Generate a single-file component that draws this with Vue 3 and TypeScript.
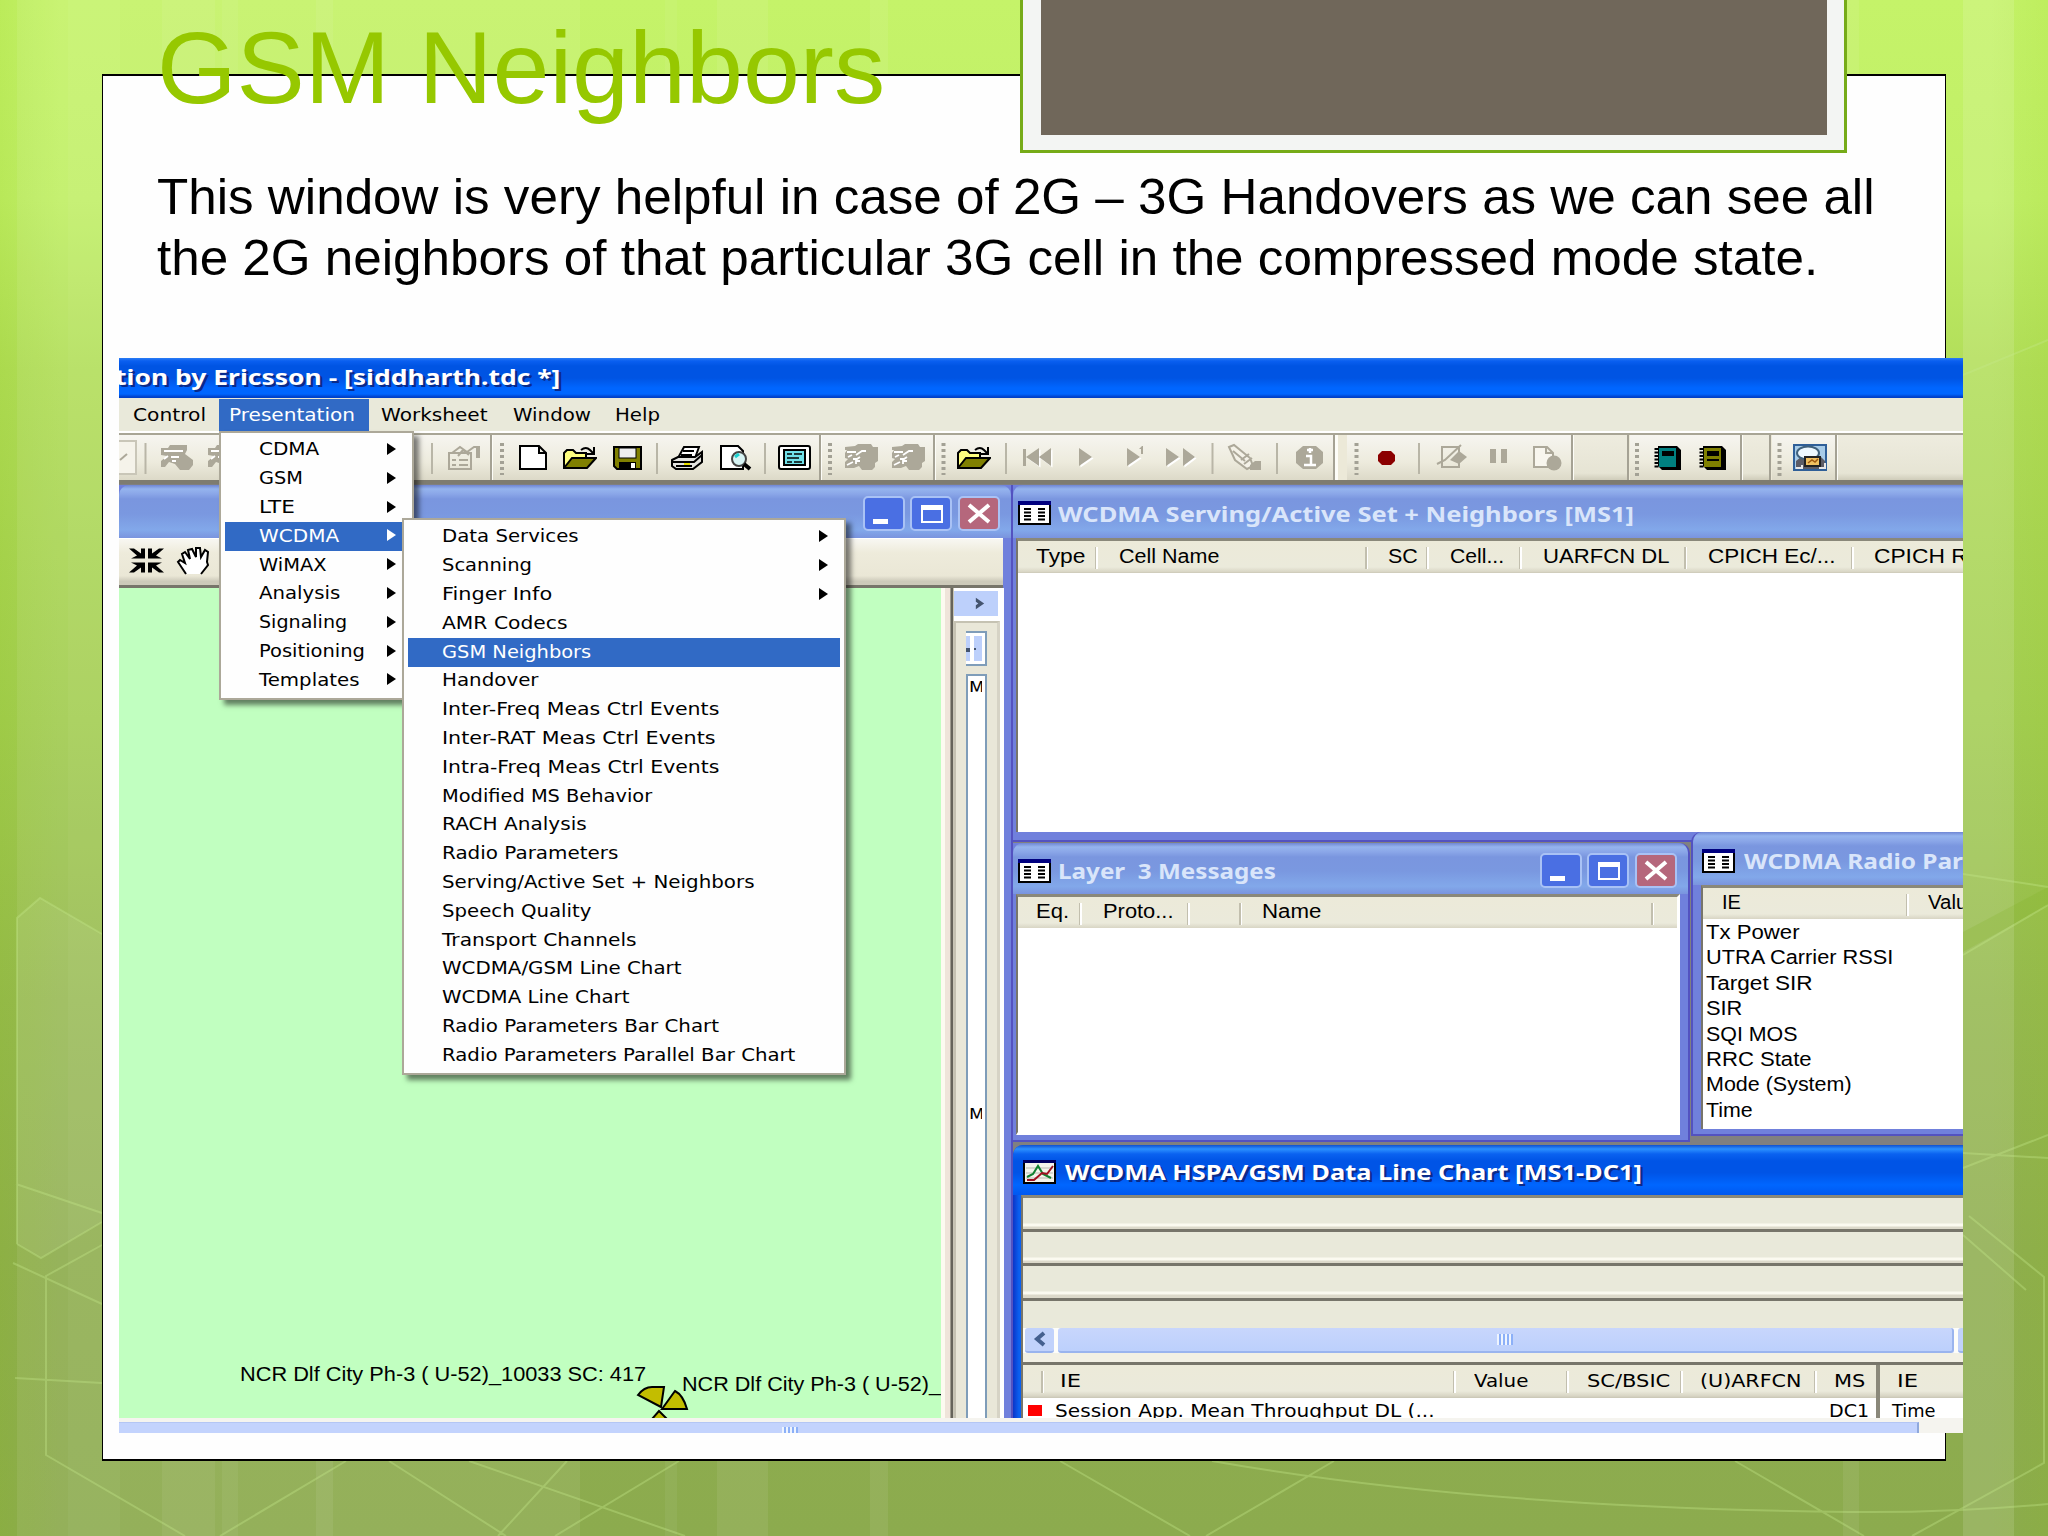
<script setup lang="ts">
interface Item { label: string; w: number; sub?: boolean; active?: boolean }
interface Cell { label: string; w: number; cell: number; pad: number; last?: boolean }

// Stretches a label horizontally so that it takes exactly the given width.
const vFit = {
  mounted(el: HTMLElement, binding: { value: number }) {
    const natural = el.offsetWidth
    if (natural > 0) el.style.transform = `scaleX(${binding.value / natural})`
  },
}

const menuBar: Item[] = [
  { label: 'Control', w: 73 },
  { label: 'Presentation', w: 126, active: true },
  { label: 'Worksheet', w: 107 },
  { label: 'Window', w: 78 },
  { label: 'Help', w: 45 },
]

const presentation: Item[] = [
  { label: 'CDMA', w: 60, sub: true },
  { label: 'GSM', w: 44, sub: true },
  { label: 'LTE', w: 36, sub: true },
  { label: 'WCDMA', w: 80, sub: true, active: true },
  { label: 'WiMAX', w: 68, sub: true },
  { label: 'Analysis', w: 81, sub: true },
  { label: 'Signaling', w: 88, sub: true },
  { label: 'Positioning', w: 106, sub: true },
  { label: 'Templates', w: 101, sub: true },
]

const wcdma: Item[] = [
  { label: 'Data Services', w: 137, sub: true },
  { label: 'Scanning', w: 90, sub: true },
  { label: 'Finger Info', w: 110, sub: true },
  { label: 'AMR Codecs', w: 125 },
  { label: 'GSM Neighbors', w: 149, active: true },
  { label: 'Handover', w: 97 },
  { label: 'Inter-Freq Meas Ctrl Events', w: 277 },
  { label: 'Inter-RAT Meas Ctrl Events', w: 273 },
  { label: 'Intra-Freq Meas Ctrl Events', w: 277 },
  { label: 'Modified MS Behavior', w: 210 },
  { label: 'RACH Analysis', w: 145 },
  { label: 'Radio Parameters', w: 176 },
  { label: 'Serving/Active Set + Neighbors', w: 313 },
  { label: 'Speech Quality', w: 149 },
  { label: 'Transport Channels', w: 194 },
  { label: 'WCDMA/GSM Line Chart', w: 239 },
  { label: 'WCDMA Line Chart', w: 188 },
  { label: 'Radio Parameters Bar Chart', w: 277 },
  { label: 'Radio Parameters Parallel Bar Chart', w: 353 },
]

const servingCols: Cell[] = [
  { label: 'Type', w: 49, cell: 80, pad: 18 },
  { label: 'Cell Name', w: 100, cell: 270, pad: 21 },
  { label: 'SC', w: 30, cell: 61, pad: 20 },
  { label: 'Cell...', w: 54, cell: 93, pad: 21 },
  { label: 'UARFCN DL', w: 126, cell: 165, pad: 21 },
  { label: 'CPICH Ec/...', w: 127, cell: 167, pad: 21 },
  { label: 'CPICH RSCP', w: 140, cell: 170, pad: 20 },
]
const layer3Cols: Cell[] = [
  { label: 'Eq.', w: 33, cell: 64, pad: 18 },
  { label: 'Proto...', w: 70, cell: 108, pad: 21 },
  { label: '', w: 0, cell: 52, pad: 0 },
  { label: 'Name', w: 59, cell: 412, pad: 20 },
]
const radioCols: Cell[] = [
  { label: 'IE', w: 19, cell: 206, pad: 19 },
  { label: 'Value', w: 51, cell: 100, pad: 19 },
]
const chartCols: Cell[] = [
  { label: '', w: 0, cell: 21, pad: 0 },
  { label: 'IE', w: 21, cell: 412, pad: 16 },
  { label: 'Value', w: 54, cell: 113, pad: 18 },
  { label: 'SC/BSIC', w: 83, cell: 114, pad: 18 },
  { label: '(U)ARFCN', w: 102, cell: 134, pad: 17 },
  { label: 'MS', w: 31, cell: 60, pad: 17, last: true },
]
const radioRows: Item[] = [
  { label: 'Tx Power', w: 93 },
  { label: 'UTRA Carrier RSSI', w: 187 },
  { label: 'Target SIR', w: 106 },
  { label: 'SIR', w: 36 },
  { label: 'SQI MOS', w: 92 },
  { label: 'RRC State', w: 106 },
  { label: 'Mode (System)', w: 146 },
  { label: 'Time', w: 47 },
]

const stripes = [
  [17, 51, 0.07], [68, 52, 0.1], [120, 460, 0.07], [162, 53, 0.06], [222, 16, 0.05], [316, 17, 0.07],
  [665, 12, 0.05], [717, 51, 0.07], [870, 18, 0.07], [1843, 16, 0.07], [1963, 51, 0.12],
]
</script>

<template>
  <div class="slide">
    <svg class="backdrop" viewBox="0 0 2048 1536">
      <rect v-for="(s, i) in stripes" :key="i" :x="s[0]" y="0" :width="s[1]" height="1536" fill="#fff" :opacity="s[2]" />
      <g fill="#fff" opacity=".06">
        <path d="M17 918L40 898L102 934V1222L41 1258L17 1244Z" />
      </g>
      <path d="M1963 932L2048 887V905L1963 952Z" fill="#7fb020" opacity=".2" />
      <g fill="none" stroke="#c4e88a" stroke-width="2" opacity=".36">
        <path d="M17 1244V918L40 898L102 934M17 1244L41 1258L102 1222M16 1184L102 1213M102 1245L46 1276V1455L185 1536M13 1263L102 1304M15 1378L102 1383" />
        <path d="M346 1461L220 1536M389 1461L506 1536M469 1461L685 1536M567 1461L498 1536M679 1461L555 1536" />
        <path d="M1060 1461L1190 1536M1334 1461L1206 1536M1735 1461L1864 1536M1212 1461Q1480 1508 1850 1512Q1950 1513 2048 1504" />
        <path d="M1963 1235L2026 1290M1969 1216L2044 1277V1463L1912 1536M1963 874L2048 887M1963 955L2048 905M1963 1168L2048 1135M1963 1153L2048 1158M1963 375L2048 340" />
      </g>
    </svg>

    <svg class="defs">
      <symbol id="list" viewBox="0 0 33 24">
        <rect width="33" height="24" fill="#000" /><rect x="2" y="4" width="29" height="18" fill="#fff" />
        <rect width="33" height="4" fill="#000080" />
        <path d="M6 8h7M6 11.500h7M6 15h7M6 18.500h7M20 8h7M20 11.500h7M20 15h7M20 18.500h7" stroke="#000" stroke-width="2" />
      </symbol>
      <symbol id="chart" viewBox="0 0 33 24">
        <rect width="33" height="24" fill="#000" /><rect x="2" y="3" width="29" height="19" fill="#f4f4ec" />
        <rect width="33" height="3" fill="#000060" />
        <path d="M3 8h27M3 13h27M3 18h27" stroke="#b8b8b0" />
        <path d="M4 17l6-3 5-8 5 8 8 4" stroke="#108030" stroke-width="2" fill="none" />
        <path d="M4 20h7l8-7 5 1 6-8" stroke="#a01020" stroke-width="2" fill="none" />
      </symbol>
      <symbol id="open" viewBox="0 0 34 24">
        <path d="M1 22V7l3-3h6l3 3h10v5" fill="#ffff80" stroke="#000" stroke-width="2" />
        <path d="M1 22L9 12H33L24 22Z" fill="#808000" stroke="#000" stroke-width="2" />
        <path d="M18 4q5-4 9 0l3 3M31 1v7h-7" fill="none" stroke="#000" stroke-width="2" />
      </symbol>
      <symbol id="phones" viewBox="0 0 34 26">
        <path d="M11 2L14 0H27L29 3H34V17L31 19V23L28 26H18L15 22L10 24H1V18L4 15L1 14V9L3 6H1V3Z" fill="#aca899" />
        <path d="M3 8h9M4 13l4-2M12 11l6-4h4M9 15h4l3-2M3 21l6-3M12 20v-3h4" stroke="#fff" stroke-width="1.800" fill="none" />
      </symbol>
      <symbol id="phone" viewBox="0 0 34 26">
        <path d="M10 1H27V6L25 10L29 13L33 16V21L29 26H20L15 20L9 18L5 23H1V17L7 12L1 11V4H8Z" fill="#aca899" />
        <path d="M4 7h19M4 15l4-3M11 13h8M12 17h4" stroke="#fff" stroke-width="1.800" fill="none" />
      </symbol>
      <symbol id="controls" viewBox="0 0 138 35">
        <g stroke="#a9c2f5" stroke-width="2">
          <rect x="1" y="1" width="40" height="33" rx="4" fill="#4a6fe3" />
          <rect x="48" y="1" width="40" height="33" rx="4" fill="#4a6fe3" />
          <rect x="96" y="1" width="40" height="33" rx="4" fill="#b5677c" />
        </g>
        <rect x="10" y="23" width="15" height="5" fill="#fff" />
        <path d="M59 11H79V26H59Z" fill="none" stroke="#fff" stroke-width="2" />
        <rect x="58" y="9" width="22" height="5" fill="#fff" />
        <path d="M106 9L126 26M126 9L106 26" stroke="#fff" stroke-width="4" />
      </symbol>
    </svg>

    <main class="sheet">
      <h1 class="title"><span v-fit="728" class="fit">GSM Neighbors</span></h1>
      <p class="body">
        <span v-fit="1718" class="fit">This window is very helpful in case of 2G – 3G Handovers as we can see all</span><br>
        <span v-fit="1661" class="fit">the 2G neighbors of that particular 3G cell in the compressed mode state.</span>
      </p>
    </main>
    <div class="plaque"><div></div></div>

    <section class="app">
      <header class="caption"><span v-fit="445" class="fit">tion by Ericsson - [siddharth.tdc *]</span></header>
      <nav class="menubar">
        <div v-for="m in menuBar" :key="m.label" class="entry" :class="[{ on: m.active }, m.label.toLowerCase()]">
          <span v-fit="m.w" class="fit">{{ m.label }}</span>
        </div>
      </nav>

      <div class="toolbar">
        <svg class="g1" viewBox="119 435 371 45">
          <path d="M119 441h17v33h-17" fill="#f5f3ea" stroke="#c9c6b8" stroke-width="2" /><path d="M120 460l7-6" stroke="#aca899" stroke-width="2" />
          <path d="M145.500 443v31M432 443v31" stroke="#b9b6a7" stroke-width="2" />
          <use href="#phone" x="160" y="444" width="34" height="26" /><use href="#phone" x="207" y="444" width="34" height="26" />
          <g stroke="#aca899" fill="none" stroke-width="2"><path d="M449 453h22v16h-22zM452 460h4M459 460h9M452 465h4M459 465h9M452 453l8-6 7 5 7-5h6M458 456l5-6 6 5" /><path d="M478 446v12" stroke-width="4" /></g>
        </svg>
        <svg class="g2" viewBox="493 435 326 45">
          <path d="M502 443v32" class="grip" />
          <path d="M520 446H539L546 453V469H520ZM539 446V453H546" fill="#fff" stroke="#000" stroke-width="2" />
          <use href="#open" x="563" y="446" width="34" height="24" />
          <path d="M614 447H641V469H617L614 466Z" fill="#808000" stroke="#000" stroke-width="2" /><rect x="619" y="448" width="17" height="10" fill="#eee" stroke="#000" /><rect x="619" y="462" width="17" height="7" /><rect x="631" y="463" width="4" height="5" fill="#fff" />
          <path d="M657 443v31M765 443v31" stroke="#b9b6a7" stroke-width="2" />
          <path d="M678 458L684 447H699L695 458M683 451h11M681 455h11" fill="#fff" stroke="#000" stroke-width="2" /><path d="M672 460L678 457H695L702 452V462L693 469H676L672 466Z" fill="#e4e4e0" stroke="#000" stroke-width="2" /><path d="M673 462H694L702 455M676 466H692" stroke="#000" stroke-width="2" fill="none" /><path d="M684 464h6" stroke="#e8e000" stroke-width="2" />
          <path d="M721 446H738L743 451V469H721Z" fill="#fff" stroke="#000" stroke-width="2" /><circle cx="739" cy="459" r="7" fill="#d7f4f4" stroke="#444" stroke-width="2" /><path d="M744 464L750 469" stroke="#000" stroke-width="4" /><path d="M735 457l4-3" stroke="#20d0d0" stroke-width="3" />
          <rect x="779" y="446" width="31" height="23" rx="2" fill="#fff" stroke="#000" stroke-width="2" /><rect x="784" y="450" width="21" height="15" fill="#70e0e8" stroke="#000" stroke-width="2" /><path d="M787 454h5M794 454h8M787 458h12M787 462h5M794 462h8" stroke="#000" stroke-width="1.500" />
        </svg>
        <svg class="g3" viewBox="822 435 111 45">
          <path d="M830 443v32" class="grip" /><use href="#phones" x="844" y="444" width="34" height="26" /><use href="#phones" x="891" y="444" width="34" height="26" />
        </svg>
        <svg class="g4" viewBox="936 435 397 45">
          <path d="M943.500 443v32" class="grip" /><use href="#open" x="957" y="446" width="34" height="24" />
          <path d="M1006 443v31M1212.500 443v31M1277 443v31" stroke="#b9b6a7" stroke-width="2" />
          <g class="hi" transform="translate(1.500 1.500)"><path d="M1039 448V466L1026 457ZM1051 448V466L1039 457ZM1079 448V466L1092 457ZM1127 448V466L1140 457ZM1166 448V466L1179 457ZM1183 448V466L1195 457Z" /></g>
          <path d="M1023 449h3v17h-3ZM1039 448V466L1026 457ZM1051 448V466L1039 457ZM1079 448V466L1092 457ZM1127 448V466L1140 457ZM1166 448V466L1179 457ZM1183 448V466L1195 457ZM1139 449l3-3h1v8h-2v-5Z" class="dim" />
          <path d="M1229 447l5-2 16 13 3 8-6 3-12-9ZM1233 451l12 10M1241 460l8-6M1244 464l8-6" fill="#f4f2e8" stroke="#aca899" stroke-width="2" /><path d="M1250 465l5-4h6v9h-11Z" class="dim" />
          <path d="M1303 446h13l7 6v11l-7 6h-13l-7-6v-11Z" class="dim" /><path d="M1310 448v5M1307 450h6M1306 456h5v9M1304 465h12" stroke="#fff" stroke-width="2.500" fill="none" />
        </svg>
        <svg class="g5" viewBox="1347 435 224 45">
          <path d="M1356.500 443v32" class="grip" /><path d="M1382 451h9l4 4v6l-4 4h-9l-4-4v-6Z" fill="#8b0000" />
          <path d="M1419 443v31" stroke="#b9b6a7" stroke-width="2" />
          <path d="M1442 447h17v20h-17ZM1437 464l8-4 16-15" fill="none" stroke="#aca899" stroke-width="2" /><path d="M1450 460l9-9 8 6-8 7Z" class="dim" />
          <path d="M1490 449h6v14h-6ZM1501 449h6v14h-6Z" class="dim" /><path d="M1534 447h13l6 6v14h-19ZM1546 447v6h7" fill="#f8f6ee" stroke="#aca899" stroke-width="2" /><circle cx="1554" cy="463" r="7.500" class="dim" />
        </svg>
        <div class="blank b1"></div>
        <svg class="g6" viewBox="1630 435 110 45">
          <path d="M1637 443v34" class="grip" />
          <path d="M1658 446h19l4 4v20h-19l-4-4Z" /><rect x="1659" y="448" width="17" height="19" fill="#008080" /><rect x="1662" y="451" width="12" height="5" /><path d="M1656.500 448v20" stroke="#000" stroke-width="4" stroke-dasharray="2 1.500" />
          <path d="M1703 446h19l4 4v20h-19l-4-4Z" /><rect x="1704" y="448" width="17" height="19" fill="#808000" /><rect x="1707" y="451" width="12" height="5" /><path d="M1707 460h12" stroke="#000" stroke-width="2" /><path d="M1701.500 448v20" stroke="#000" stroke-width="4" stroke-dasharray="2 1.500" />
        </svg>
        <div class="blank b2"></div>
        <svg class="g7" viewBox="1772 435 63 45">
          <path d="M1779.500 443v34" class="grip" />
          <rect x="1794" y="445" width="32" height="25" fill="#a8cce8" stroke="#2f5f98" stroke-width="2" /><path d="M1796 461l5-4h20l4 4v8h-29Z" fill="#5c5c66" /><ellipse cx="1808" cy="453" rx="11" ry="6.500" fill="#eef8fe" stroke="#40617c" stroke-width="2" /><path d="M1796 468h6v-3M1819 468h6v-5" stroke="#e8e8e8" stroke-width="2" fill="none" /><rect x="1805" y="457" width="15" height="9" fill="#f0c060" stroke="#222" stroke-width="2" /><path d="M1808 463l4-3 3 2 3-3" stroke="#a05a10" stroke-width="1.500" fill="none" />
        </svg>
        <div class="blank b3"></div>
      </div>

      <div class="desktop">
        <div class="win map">
          <div class="bar"><svg class="ctl"><use href="#controls" /></svg></div>
          <div class="tools">
            <svg viewBox="119 538 110 47">
              <g transform="translate(0 -1.500)"><path d="M129 549h5l7 5v-5h4v10h-14l6-3ZM164 549h-5l-7 5v-5h-4v10h14l-6-3ZM129 573h5l7-5v5h4v-10h-14l6 3ZM164 573h-5l-7-5v5h-4v-10h14l-6 3Z" fill="#000" /></g>
              <path d="M186 573l-8-12 2-2 5 3-3-9 3-2 5 7-2-9 4-1 4 8v-9h4l1 9 4-7 3 2-1 10 1 3-7 9" fill="#fff" stroke="#000" stroke-width="2" />
            </svg>
          </div>
          <div class="content">
            <div class="canvas">
              <span class="pin p1"><span v-fit="406" class="fit">NCR Dlf City Ph-3 ( U-52)_10033 SC: 417</span></span>
              <span class="pin p2"><span v-fit="259" class="fit">NCR Dlf City Ph-3 ( U-52)_</span></span>
              <svg class="site" viewBox="636 1384 54 34"><g fill="#c3bd00" stroke="#000" stroke-width="2"><path d="M661 1407L638 1395Q644 1387 652 1387H664Z" /><path d="M662 1409L675 1391Q683 1395 687 1409Z" /><path d="M652 1419L659 1411L667 1419Z" /></g></svg>
            </div>
            <div class="splitter"></div>
            <div class="side">
              <div class="more"><svg viewBox="0 0 12 14"><path d="M1 0l10 7-10 7V9l3-2-3-2Z" fill="#44546f" /></svg></div>
              <div class="pane">
                <div class="mini"><i></i><b></b></div>
                <div class="tall"><span>M</span><span>M</span></div>
              </div>
            </div>
          </div>
        </div>

        <div class="win serving">
          <div class="bar"><svg class="ico"><use href="#list" /></svg><span v-fit="576" class="fit">WCDMA Serving/Active Set + Neighbors [MS1]</span></div>
          <div class="view">
            <div class="head"><div v-for="c in servingCols" :key="c.label" class="cell" :style="{ width: c.cell + 'px', paddingLeft: c.pad + 'px' }"><span v-fit="c.w" class="fit">{{ c.label }}</span></div></div>
          </div>
        </div>

        <div class="win layer3">
          <div class="bar"><svg class="ico"><use href="#list" /></svg><span v-fit="218" class="fit">Layer&nbsp; 3 Messages</span><svg class="ctl"><use href="#controls" /></svg></div>
          <div class="view">
            <div class="head"><div v-for="c in layer3Cols" :key="c.label" class="cell" :style="{ width: c.cell + 'px', paddingLeft: c.pad + 'px' }"><span v-fit="c.w" class="fit">{{ c.label }}</span></div></div>
          </div>
        </div>

        <div class="win radio">
          <div class="bar"><svg class="ico"><use href="#list" /></svg><span v-fit="320" class="fit">WCDMA Radio Parameters</span></div>
          <div class="view">
            <div class="head"><div v-for="c in radioCols" :key="c.label" class="cell" :style="{ width: c.cell + 'px', paddingLeft: c.pad + 'px' }"><span v-fit="c.w" class="fit">{{ c.label }}</span></div></div>
            <div v-for="r in radioRows" :key="r.label" class="row"><span v-fit="r.w" class="fit">{{ r.label }}</span></div>
          </div>
        </div>

        <div class="win line">
          <div class="bar live"><svg class="ico"><use href="#chart" /></svg><span v-fit="577" class="fit">WCDMA HSPA/GSM Data Line Chart [MS1-DC1]</span></div>
          <div class="view">
            <div class="band"></div><div class="band"></div><div class="band"></div>
            <div class="rest"></div>
            <div class="scroll">
              <div class="btn"><svg viewBox="0 0 14 16"><path d="M11 2L4 8l7 6" fill="none" stroke="#44608f" stroke-width="4" /></svg></div>
              <div class="thumb"><i></i></div>
              <div class="btn"></div>
            </div>
            <div class="tables">
              <div class="table left">
                <div class="head"><div v-for="c in chartCols" :key="c.label" class="cell" :class="{ last: c.last }" :style="{ width: c.cell + 'px', paddingLeft: c.pad + 'px' }"><span v-fit="c.w" class="fit">{{ c.label }}</span></div></div>
                <div class="line-row"><i></i><span v-fit="380" class="fit">Session App. Mean Throughput DL (...</span><span v-fit="40" class="fit">DC1</span></div>
              </div>
              <div class="table right">
                <div class="head"><span v-fit="21" class="fit ie">IE</span></div>
                <div class="line-row"><span v-fit="44" class="fit time">Time</span></div>
              </div>
            </div>
          </div>
        </div>
      </div>
      <div class="hscroll"><div><i></i></div></div>

      <ul class="menu m1">
        <li v-for="m in presentation" :key="m.label" :class="{ on: m.active }"><span v-fit="m.w" class="fit">{{ m.label }}</span><i v-if="m.sub"></i></li>
      </ul>
      <ul class="menu m2">
        <li v-for="m in wcdma" :key="m.label" :class="{ on: m.active }"><span v-fit="m.w" class="fit">{{ m.label }}</span><i v-if="m.sub"></i></li>
      </ul>
    </section>
  </div>
</template>

<style>
body { margin: 0; overflow: hidden; }
</style>

<style scoped>
* { box-sizing: border-box; }
.slide { position: relative; width: 2048px; height: 1536px; overflow: hidden; padding: 74px 0 0 102px; font-family: "Liberation Sans", Arial, sans-serif; background: linear-gradient(90deg, rgba(130,190,0,.14), transparent 60px, transparent 1990px, rgba(130,190,0,.1)), linear-gradient(#c5f369 0, #c1ef67 200px, #b2de5a 370px, #a3cd52 720px, #96b950 1000px, #8fae4f 1250px, #8cab4e 1536px); }
.backdrop { position: absolute; left: 0; top: 0; width: 2048px; height: 1536px; }
.defs { position: absolute; width: 0; height: 0; }
.fit { display: inline-block; white-space: pre; transform-origin: 0 50%; flex: none; }
.sheet { position: relative; width: 1844px; height: 1387px; background: #fefefe; border: 1px solid #000; border-width: 2px 1px; padding-left: 54px; }
.title { margin: -68px 0 0; height: 116px; font-weight: 400; font-size: 101.5px; line-height: 120px; color: #96c800; }
.body { margin: 42.5px 0 0; font-size: 50px; line-height: 61.7px; color: #000; }
.plaque { position: absolute; left: 1020px; top: -10px; width: 827px; height: 163px; background: #f3f5f3; border: 3px solid #76ab18; padding: 7px 17px 15px 18px; }
.plaque div { height: 100%; background: #70675a; }

.app { position: absolute; left: 119px; top: 358px; width: 1844px; height: 1075px; overflow: hidden; background: #ece9d8; }
.caption { height: 40px; padding-left: 0; text-indent: 0; background: linear-gradient(#2a7cf4 0, #0a5ff0 3px, #0054e3 8px, #0054e3 20px, #0066ff 30px, #0066ff 36px, #0040c8 39px); color: #fff; font: 700 21px/38px "Noto Sans", sans-serif; text-shadow: 2px 2px 0 #0a2a8a; }
.caption .fit { margin-left: -4px; }
.menubar { display: flex; height: 37px; padding: 1px 0 4px; border-bottom: 2px solid #a8a595; box-shadow: inset 0 -2px #fff; background: #e9e9da; font: 18px/31px "DejaVu Sans", Verdana, sans-serif; color: #000; }
.entry { height: 32px; flex: none; width: 102px; }
.control { width: 100px; padding-left: 14px; }
.presentation { width: 150px; padding-left: 10px; }
.worksheet { width: 144px; padding-left: 12px; }
.window { padding-left: 0; width: 102px; }
.on { background: #316ac5; color: #fff; }

.toolbar { display: flex; height: 49px; background: #ece9d8; border-bottom: 4px solid #7e7c70; }
.toolbar svg { box-sizing: content-box; flex: none; height: 45px; border-right: 2px solid #a5a294; background: linear-gradient(#f6f5f0, #edebdd 60%, #dcd9c8); box-shadow: 3px 0 #fdfdf8; margin-right: 1px; }
.grip { stroke: #a3a195; stroke-width: 4; stroke-dasharray: 3 3; fill: none; }
.dim { fill: #aca899; }
.hi { fill: #fff; }
.g1 { width: 371px; } .g2 { width: 326px; } .g3 { width: 111px; } .g4 { width: 397px; }
.toolbar .g4 { margin-right: 12px; }
.g5 { width: 224px; } .g6 { width: 110px; } .g7 { width: 63px; }
.blank { background: linear-gradient(#eeecdf, #e6e4d4 85%, #cfccba); flex: none; border-right: 2px solid #a5a294; margin-right: 1px; }
.b1 { width: 55px; } .b2 { width: 28px; } .b3 { flex: 1; border: 0; margin: 0; }

.desktop { position: relative; height: 934px; background: #808080; overflow: hidden; }
.win { position: absolute; background: #7080dc; display: flex; flex-direction: column; }
.bar { position: relative; flex: none; display: flex; align-items: center; height: 53px; color: #d9e5fa; font: 700 21px/30px "Noto Sans", sans-serif; background: linear-gradient(#6f86d4 0, #95b4ee 4px, #8aa6e8 9px, #7a96df 14px, #7a98e0 55%, #82a8ea 85%, #7a94de 100%); border-radius: 10px 10px 0 0; }
.bar.live { color: #fff; text-shadow: 2px 2px 0 #0a2a8a; background: linear-gradient(#1050d0 0, #2c90ff 4px, #0a62f0 9px, #0054e6 16px, #0054e6 55%, #0066ff 80%, #0058f0 100%); }
.ico { width: 33px; height: 24px; flex: none; }
.ctl { position: absolute; width: 138px; height: 35px; top: 11px; right: 12px; }
.view { background: #fff; border-left: 2px solid #77756a; border-top: 3px solid #8a887a; overflow: hidden; flex: 1; min-height: 0; }
.head { display: flex; height: 32px; background: linear-gradient(#ecead9 0, #ebeadb 26px, #d8d5c4 31px, #c8c5b4); font-size: 20px; line-height: 30px; overflow: hidden; }
.cell { flex: none; position: relative; height: 32px; }
.cell::after { content: ""; position: absolute; right: 0; top: 6px; height: 22px; width: 3px; background: linear-gradient(90deg, #c2bfae 50%, #fff 50%); }
.cell.last::after { display: none; }

.map { left: -6px; top: 1px; width: 900px; height: 940px; padding: 0 8px 0 6px; border-right: 2px solid #5352c0; }
.map .bar { height: 53px; margin-right: -8px; }
.map .ctl { right: 10px; }
.tools { height: 50px; flex: none; background: linear-gradient(#f8f7f2, #eeebdb 30%, #eae7d6 80%, #cdcaba 92%); border-bottom: 3px solid #77756a; border-top: 1px solid #fff; }
.tools svg { width: 110px; height: 47px; display: block; }
.content { flex: 1; display: flex; background: #ece9d8; }
.canvas { position: relative; width: 822px; background: #c1ffc0; overflow: hidden; flex: none; font-size: 19.5px; line-height: 24px; }
.pin { position: absolute; } .p1 { left: 121px; top: 774px; } .p2 { left: 563px; top: 784px; }
.site { position: absolute; left: 517px; top: 796px; width: 54px; height: 34px; }
.splitter { width: 13px; flex: none; background: linear-gradient(90deg, #fcfaf0 0 4px, #efe4da 4px 9px, #a09d90 9px 10px, #66645a 10px 12px, #c9c6b6 12px); }
.side { flex: 1; display: flex; flex-direction: column; padding-right: 4px; background: #fff; }
.more { height: 25px; margin: 3px 2px 5px 0; background: #bdd0fb; display: flex; align-items: center; justify-content: center; flex: none; padding-left: 8px; }
.more svg { width: 10px; height: 13px; }
.pane { flex: 1; background: #e9e7d8; border: 2px solid #c5c2b2; border-bottom: 0; border-right: 3px solid #d6d3c5; padding: 8px 10px 0; display: flex; flex-direction: column; gap: 8px; }
.mini { height: 35px; width: 21px; display: flex; border: 2px solid #7f9db9; border-left: 0; background: #fff; padding: 3px 3px 3px 0; gap: 4px; }
.mini i { width: 4px; background: linear-gradient(#bdd0fb 50%, #44546f 50% 65%, #bdd0fb 65%); } .mini b { flex: 1; background: linear-gradient(90deg, #44546f 2px, transparent 2px) 0 12px / 100% 2px no-repeat, #bdd0fb; }
.tall { flex: 1; width: 21px; border: 2px solid #7f9db9; background: #fff; font: 18px/20px "DejaVu Sans", sans-serif; display: flex; flex-direction: column; gap: 415px; padding-top: 4px; }
.tall span { width: 13px; height: 12px; line-height: 15px; overflow: hidden; margin-left: 1px; flex: none; }

.serving { left: 894px; top: 1px; width: 960px; height: 357px; padding-bottom: 8px; border-bottom: 2px solid #5352c0; }
.serving .bar, .layer3 .bar { padding: 5px 0 0 5px; gap: 7px; }
.serving .view { margin-left: 3px; }
.serving .ico { margin-top: -2px; }
.layer3 { left: 894px; top: 359px; width: 677px; height: 299px; padding: 0 8px 5px 0; border: solid #5352c0; border-width: 0 2px 2px 0; border-radius: 0 10px 0 0; }
.layer3 .bar { height: 51px; margin-right: -8px; }
.layer3 .ctl { top: 10px; right: 10px; }
.layer3 .view { margin-left: 3px; border-right: 3px solid #fff; border-bottom: 3px solid #fff; }
.layer3 .head, .radio .head { line-height: 29px; height: 31px; }
.radio { left: 1572px; top: 348px; width: 280px; height: 304px; padding: 0 0 5px 8px; border: solid #5352c0; border-width: 0 0 2px 2px; border-radius: 10px 0 0 0; }
.radio .bar { height: 53px; margin-left: -8px; padding: 4px 0 0 9px; gap: 9px; }
.row { height: 25.4px; font-size: 20px; line-height: 26px; padding-left: 3px; }
.line { left: 894px; top: 661px; width: 960px; height: 290px; background: linear-gradient(90deg, #0a35c8, #0a60f0 6px, #0054e3); border-radius: 10px 0 0 0; }
.line .bar { height: 50px; padding: 3px 0 0 10px; gap: 9px; }
.line .view { margin-left: 8px; background: #e9e9da; }
.band { height: 34.500px; border-bottom: 3px solid #77756a; background: linear-gradient(#e9e9da 25px, #fbfaf0 26px 28px, #dcd9ca 29px); }
.band:first-child { height: 33.500px; }
.rest { height: 27px; }
.scroll { height: 25px; display: flex; gap: 4px; padding-left: 2px; background: #fdfdfa; }
.btn, .thumb { background: #c1d2fb; border-bottom: 2px solid #9ab4ee; border-radius: 3px; }
.btn { width: 29px; flex: none; display: flex; align-items: center; justify-content: center; }
.btn svg { width: 14px; height: 16px; }
.thumb { width: 896px; flex: none; display: flex; align-items: center; justify-content: center; background: linear-gradient(#c8d6fc, #bcd0fc); border-right: 2px solid #9ab4ee; }
.thumb i, .hscroll i { width: 16px; height: 11px; background: repeating-linear-gradient(90deg, #eef4fe 0 2px, #8cb0f8 2px 4px); }
.tables { display: flex; height: 64px; border-top: 3px solid #77756a; margin-top: 9px; box-shadow: 0 -9px #f2f0e4; }
.table { font: 18px/30px "DejaVu Sans Condensed", "DejaVu Sans", sans-serif; flex: none; background: #fff; }
.table .head { font: inherit; height: 33px; line-height: 32px; }
.left { width: 857px; border-right: 4px solid #8a887a; }
.right { width: 120px; }
.line-row { display: flex; height: 28px; line-height: 25px; align-items: flex-start; position: relative; }
.line-row i { width: 14px; height: 11px; margin: 7px 13px 0 5px; background: #f00; }
.ie { margin-left: 17px; } .time { margin-left: 12px; }
.left .line-row .fit:last-child { position: absolute; left: 806px; top: 0; }

.hscroll { height: 15px; background: #f5f4ef; padding-top: 4px; }
.hscroll div { width: 1800px; height: 11px; background: #c3d3fd; border-right: 2px solid #8fa8dc; border-top: 1px solid #b4c6f4; padding: 4px 0 0 663px; display: flex; }

.menu { position: absolute; margin: 0; list-style: none; background: #fefefe; border: 2px solid #aca899; box-shadow: 5px 5px 5px rgba(0,0,0,.5); font: 18px/27px "DejaVu Sans", Verdana, sans-serif; color: #000; }
.menu li { position: relative; display: flex; height: 28.800px; align-items: center; padding-bottom: 3px; }
.menu li i { position: absolute; right: 6px; top: 7px; border: solid transparent; border-width: 6px 0 6px 9px; border-left-color: currentColor; }
.m1 { left: 100px; top: 73px; width: 195px; height: 269px; padding: 3px 3px 0 4px; }
.m1 li { padding-left: 34px; }
.m1 li i { right: 13px; }
.m2 { left: 283px; top: 160px; width: 444px; height: 557px; padding: 3px 4px 0; }
.m2 li { padding-left: 34px; }
.m2 li i { right: 12px; }
</style>
